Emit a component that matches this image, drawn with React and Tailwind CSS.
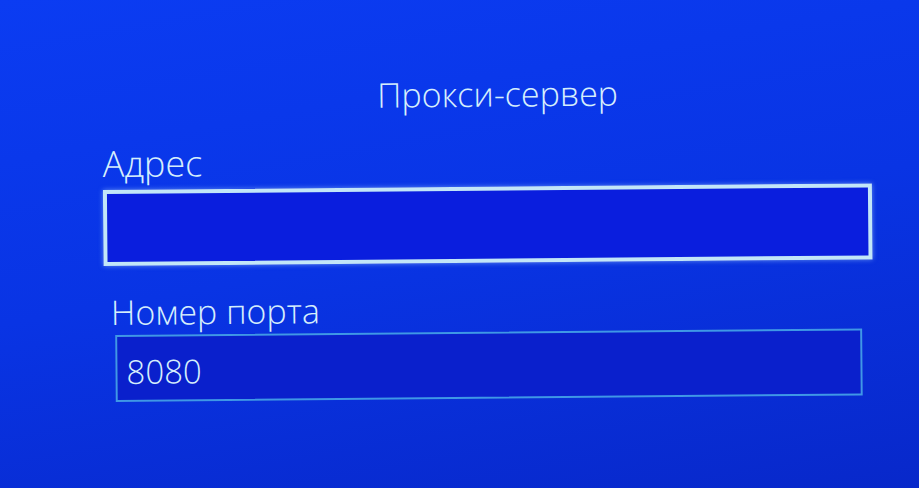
export default function App() {
  return (
    <div className="w-[919px] h-[488px] overflow-hidden bg-[linear-gradient(170deg,#0b3cf2_0%,#0934e4_50%,#0828ca_100%)] font-['Open_Sans','Liberation_Sans',sans-serif] text-[#d6eefc]">
      <div className="pl-[103px] pr-[47px] pt-[74px] -rotate-[0.5deg]">
        <h1 className="pl-[22px] text-center text-[34px] font-light leading-[40px]">Прокси-сервер</h1>

        <div className="mt-[27px] text-[36px] font-light leading-[40px]">Адрес</div>
        <div className="mt-[6px] h-[76px] border-4 border-[#c2e6f8] bg-[#0a1ede] shadow-[0_0_5px_rgba(170,215,255,0.55)]" />

        <div className="px-[11px]">
          <div className="-ml-[4px] mt-[26px] text-[34px] font-light leading-[40px]">Номер порта</div>
          <div className="mt-[3px] flex h-[67px] items-center border-2 border-[#3f98e6] bg-[#0a20cc] pl-[9px] pt-[6px]">
            <span className="text-[33px] font-light leading-[40px]">8080</span>
          </div>
        </div>
      </div>
    </div>
  );
}
